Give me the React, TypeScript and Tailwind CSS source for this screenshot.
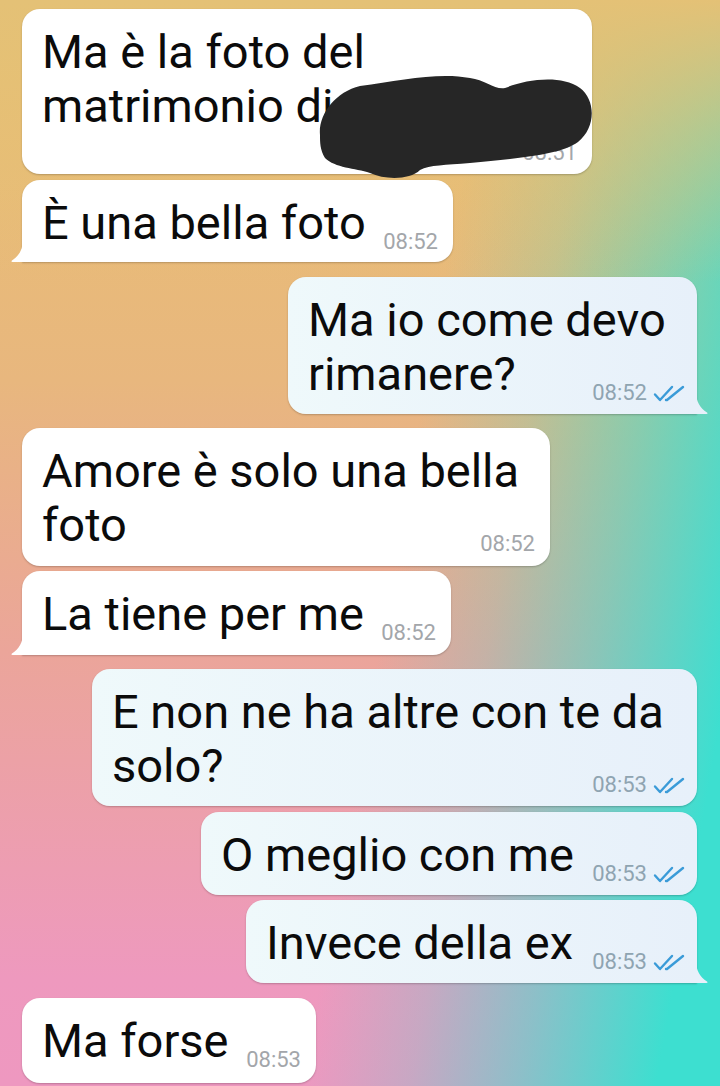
type Msg = {
  out: boolean
  lines: string[]
  time: string
  box: string
  tail?: boolean
  timeRow?: boolean
  redacted?: boolean
}

const MESSAGES: Msg[] = [
  { out: false, lines: ['Ma è la foto del', 'matrimonio di'], time: '08:51', box: 'w-[570px] h-[165px] mt-0', timeRow: true, redacted: true },
  { out: false, lines: ['È una bella foto'], time: '08:52', box: 'w-[431px] h-[82px] mt-[6px]', tail: true },
  { out: true, lines: ['Ma io come devo', 'rimanere?'], time: '08:52', box: 'w-[409px] h-[137px] mt-[15px]', tail: true },
  { out: false, lines: ['Amore è solo una bella', 'foto'], time: '08:52', box: 'w-[528px] h-[138px] mt-[14px]' },
  { out: false, lines: ['La tiene per me'], time: '08:52', box: 'w-[429px] h-[84px] mt-[5px]', tail: true },
  { out: true, lines: ['E non ne ha altre con te da', 'solo?'], time: '08:53', box: 'w-[605px] h-[137px] mt-[14px]' },
  { out: true, lines: ['O meglio con me'], time: '08:53', box: 'w-[496px] h-[83px] mt-[6px]' },
  { out: true, lines: ['Invece della ex'], time: '08:53', box: 'w-[451px] h-[83px] mt-[5px]', tail: true },
  { out: false, lines: ['Ma forse'], time: '08:53', box: 'w-[294px] h-[85px] mt-[15px]' },
]

function Checks() {
  return (
    <svg width="32" height="17" viewBox="0 0 32 17" fill="none" stroke="#3a9bd8" strokeWidth="2.4" strokeLinecap="round" strokeLinejoin="round">
      <path d="M2 9.5 L7 15 L19 2" />
      <path d="M13 15 L14 15 L30 2" />
    </svg>
  )
}

function Time({ msg }: { msg: Msg }) {
  return (
    <div className="flex items-center gap-[6px] translate-y-[3px] shrink-0">
      <span className={`text-[22px] leading-none ${msg.out ? 'text-[#8fa4b1]' : 'text-[#a3a6aa]'}`}>{msg.time}</span>
      {msg.out && <Checks />}
    </div>
  )
}

function Bubble({ msg }: { msg: Msg }) {
  const body = msg.timeRow ? msg.lines : msg.lines.slice(0, -1)
  const last = msg.lines[msg.lines.length - 1]
  return (
    <div
      className={`relative flex flex-col pt-4 pl-5 shadow-[0_1px_2px_rgba(0,0,0,0.22)] ${msg.box} ${
        msg.out
          ? 'self-end mr-[23px] pr-3 rounded-[18px] bg-gradient-to-r from-[#eff9fb] to-[#e7f0fa]'
          : 'ml-[22px] pr-[15px] rounded-[18px] bg-white'
      } ${msg.tail ? (msg.out ? 'rounded-br-none' : 'rounded-bl-none') : ''}`}
    >
      {body.map((line) => (
        <div key={line} className="whitespace-nowrap">
          {line}
        </div>
      ))}
      {msg.timeRow ? (
        <div className="h-[28px] flex items-end justify-end">
          <Time msg={msg} />
        </div>
      ) : (
        <div className="flex items-end justify-between gap-4">
          <span className="whitespace-nowrap">{last}</span>
          <Time msg={msg} />
        </div>
      )}

      {/* tail */}
      {msg.tail && !msg.out && (
        <svg className="absolute -left-[11px] bottom-0" width="12" height="22" viewBox="0 0 12 22">
          <path d="M12 0 C12 9 8 16 1 20.5 C0 21.2 0.4 22 1.5 22 L12 22 Z" fill="#ffffff" />
        </svg>
      )}
      {msg.tail && msg.out && (
        <svg className="absolute -right-[11px] bottom-0" width="12" height="22" viewBox="0 0 12 22">
          <path d="M0 0 C0 9 4 16 11 20.5 C12 21.2 11.6 22 10.5 22 L0 22 Z" fill="#e7f0fa" />
        </svg>
      )}

      {/* scribble over the name */}
      {msg.redacted && (
        <svg className="absolute left-[278px] top-[61px]" width="300" height="125" viewBox="300 70 300 125">
          <path
            d="M320 135 C318 115 335 92 360 86 C400 80 440 72 470 78 C485 80 495 90 505 88 C525 80 560 74 580 88 C596 100 596 128 578 142 C560 155 520 158 470 163 C445 165 430 165 420 170 C410 180 385 180 370 173 C355 168 335 168 325 158 C320 150 320 142 320 135 Z"
            fill="#262626"
          />
        </svg>
      )}
    </div>
  )
}

export default function App() {
  return (
    <div className="relative w-[720px] h-[1086px] overflow-hidden bg-[linear-gradient(to_bottom,rgba(228,193,118,1)_0%,rgba(228,193,118,0.5)_12%,rgba(228,193,118,0)_26%),linear-gradient(100deg,rgba(61,223,208,0)_54%,rgba(61,223,208,0.22)_66%,rgba(61,223,208,0.55)_78%,#3ddfd0_93%),linear-gradient(to_bottom,#e9c070_0%,#e8b77e_35%,#eba59a_60%,#ee99be_90%,#ee98c0_100%)]">
      <div className="flex flex-col pt-[9px] font-['Roboto',sans-serif] text-[47px] leading-[54px] text-[#0b0b0b]">
        {MESSAGES.map((m, i) => (
          <Bubble key={i} msg={m} />
        ))}
      </div>
    </div>
  )
}
